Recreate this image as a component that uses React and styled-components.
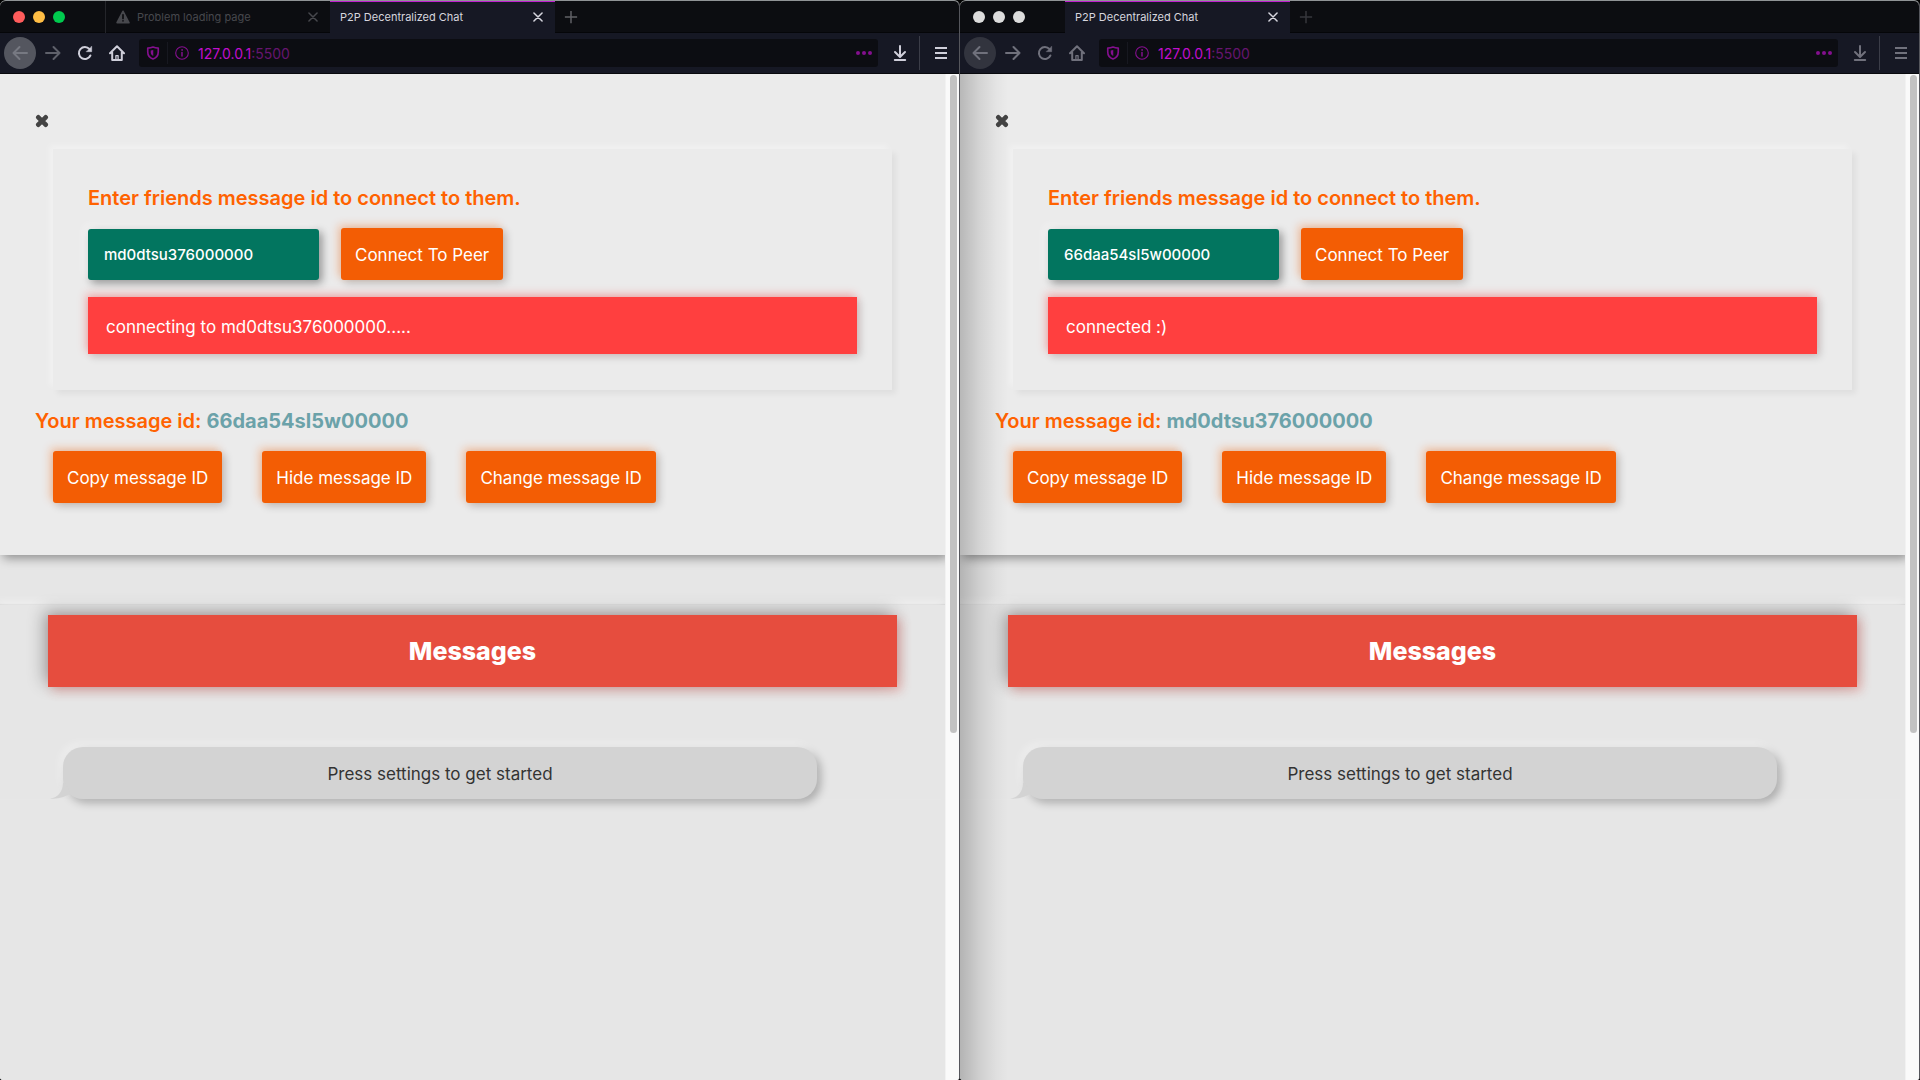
import React from "react";
import styled, { createGlobalStyle } from "styled-components";

const GlobalStyle = createGlobalStyle`
  *, *::before, *::after { box-sizing: border-box; }
  body {
    margin: 0;
    background: #000;
    font-family: Inter, "Liberation Sans", sans-serif;
    color: #333;
  }
  button, input { font-family: inherit; }
  button { border: 0; padding: 0; background: none; cursor: pointer; }
  h1, h2, p { margin: 0; }
`;

const Desktop = styled.div`
  display: grid;
  grid-template-columns: 1fr 1fr;
  min-height: 100vh;
`;

const Window = styled.section`
  display: flex;
  flex-direction: column;
  min-width: 0;
  overflow: hidden;
  border-top: 1px solid #909496;
  border-right: 1px solid #55565c;
  border-radius: 6px 6px 3px 3px;
  background: #e6e6e6;
`;

const TabBar = styled.div`
  display: flex;
  height: 32px;
  background: #0c0d11;
  border-bottom: 1px solid #050609;
`;

const Lights = styled.div`
  display: flex;
  align-items: center;
  gap: 8px;
  width: 105px;
  padding-left: 13px;
`;

const Light = styled.span`
  width: 12px;
  height: 12px;
  border-radius: 50%;
  background: ${(p) => p.$color};
`;

const Tab = styled.div`
  display: flex;
  align-items: center;
  gap: 7px;
  width: 225px;
  height: 32px;
  padding: 0 11px 0 10px;
  font-size: 11px;
  color: ${(p) => (p.$active ? "#d6d6de" : "#47484d")};
  background: ${(p) => (p.$active ? "#161824" : "transparent")};
  border-left: ${(p) => (p.$active ? "0" : "1px solid #24252a")};
  box-shadow: ${(p) => (p.$active ? "inset 0 1px #c01fd0" : "none")};
`;

const TabTitle = styled.span`
  flex: 1;
  white-space: nowrap;
`;

const IconButton = styled.button`
  display: flex;
  align-items: center;
  justify-content: center;
  flex: none;
  width: ${(p) => p.$size || 32}px;
  height: ${(p) => p.$size || 32}px;
  border-radius: 50%;
  color: ${(p) => p.$color || "inherit"};
  background: ${(p) => p.$fill || "none"};
`;

const BackButton = styled(IconButton)`
  margin-right: 1px;
`;

const Toolbar = styled.div`
  display: flex;
  align-items: center;
  height: 41px;
  padding: 0 2px 0 4px;
  background: #161824;
  border-bottom: 1px solid #08090d;
`;

const UrlBar = styled.div`
  display: flex;
  align-items: center;
  flex: 1;
  height: 28px;
  margin: 0 12px 0 6px;
  padding: 0 6px 0 7px;
  border-radius: 3px;
  background: #0c0d12;
  color: #840f8e;
  font-size: 14px;
`;

const UrlDivider = styled.span`
  width: 1px;
  height: 22px;
  margin: 0 7px;
  background: #171820;
`;

const Address = styled.span`
  flex: 1;
  margin-left: 9px;
  color: #65156f;
`;

const Host = styled.span`
  color: #c00fce;
`;

const ToolDivider = styled.span`
  width: 1px;
  height: 34px;
  margin: 0 5px 0 9px;
  background: #3b3d48;
`;

const Viewport = styled.div`
  display: flex;
  flex: 1;
`;

const Page = styled.main`
  flex: 1;
  min-width: 0;
  overflow: hidden;
  background: #e6e6e6;
  position: relative;

  &::before {
    content: "";
    display: ${(p) => (p.$shaded ? "block" : "none")};
    position: absolute;
    inset: 0 auto 0 0;
    width: 48px;
    z-index: 2;
    pointer-events: none;
    background: linear-gradient(90deg, rgba(0, 0, 0, 0.22), rgba(0, 0, 0, 0.1) 40%, rgba(0, 0, 0, 0.03) 75%, transparent);
  }
`;

const Scroller = styled.div`
  width: 14px;
  padding: 1px 2px 0 4px;
  background: #fafafa;
  border-left: 1px solid #f2f2f2;
`;

const Thumb = styled.div`
  height: 65.5%;
  border-radius: 4px;
  background: #c2c2c2;
`;

const Settings = styled.section`
  padding: 32px 35px 52px;
  background: #ebebeb;
  box-shadow: 3px 3px 10px rgba(0, 0, 0, 0.4);
`;

const CloseButton = styled.button`
  display: block;
  height: 33px;
  color: #444;
`;

const Card = styled.form`
  margin: 10px 18px 18px;
  padding: 35px 35px 36px;
  box-shadow: -4px -4px 6px rgba(255, 255, 255, 0.3), 4px 4px 6px rgba(0, 0, 0, 0.05);
`;

const Label = styled.label`
  display: block;
  font-size: 20px;
  line-height: 28px;
  font-weight: 600;
  color: #ff6200;
`;

const Row = styled.div`
  display: flex;
  align-items: flex-end;
  gap: 22px;
  margin: 16px 0 17px;
`;

const PeerInput = styled.input`
  width: 231px;
  height: 51px;
  padding: 0 16px;
  border: 0;
  border-radius: 3px;
  background: #02755f;
  color: #fff;
  font-size: 15px;
  font-weight: 500;
  box-shadow: -4px -4px 8px rgba(255, 255, 255, 0.4), 3px 3px 8px rgba(0, 0, 0, 0.4);
`;

const Action = styled.button`
  height: 52px;
  padding: 2px 14px 0;
  border-radius: 3px;
  background: #f35d04;
  color: #fff;
  font-size: 17px;
  white-space: nowrap;
  box-shadow: -3px -3px 8px rgba(255, 98, 0, 0.3), 3px 3px 8px rgba(0, 0, 0, 0.2);
`;

const Status = styled.p`
  padding: 20px 18px 16px;
  background: #ff3f3f;
  color: #fff;
  font-size: 17px;
  line-height: 21px;
  box-shadow: -2px -3px 8px rgba(255, 63, 63, 0.35), 3px 3px 8px rgba(0, 0, 0, 0.16);
`;

const OwnId = styled.h2`
  font-size: 20px;
  line-height: 26px;
  font-weight: 600;
  color: #ff6200;
`;

const IdValue = styled.span`
  font-weight: 700;
  color: #6ba2a9;
`;

const Actions = styled.div`
  display: flex;
  flex-wrap: wrap;
  gap: 40px;
  margin: 17px 18px 0;
`;

const Messages = styled.section`
  margin-top: 50px;
  padding: 10px 48px 0;
  box-shadow: -2px -4px 8px rgba(255, 255, 255, 0.4), 0 -1px 1px rgba(0, 0, 0, 0.08);
`;

const Title = styled.h1`
  padding: 18px;
  background: #e64d3e;
  color: #fff;
  text-align: center;
  font-size: 25px;
  line-height: 36px;
  font-weight: 800;
  box-shadow: -4px -4px 16px rgba(0, 0, 0, 0.3), 4px 4px 10px rgba(230, 60, 50, 0.3);
`;

const Bubble = styled.p`
  position: relative;
  margin: 60px 80px 0 15px;
  padding: 14px 20px 12px;
  border-radius: 20px;
  background: #d3d3d3;
  color: #333;
  text-align: center;
  font-size: 17px;
  line-height: 26px;
  box-shadow: -3px -4px 8px rgba(255, 255, 255, 0.35), 4px 4px 8px rgba(0, 0, 0, 0.25);
`;

const Tail = styled.svg`
  position: absolute;
  left: -15px;
  bottom: 0;
`;

const Svg = ({ s = 16, w = 2, children, ...rest }) => (
  <svg width={s} height={s} viewBox="0 0 16 16" fill="none" stroke="currentColor"
    strokeWidth={w} strokeLinecap="round" strokeLinejoin="round" aria-hidden="true" {...rest}>
    {children}
  </svg>
);

const BackIcon = () => <Svg><path d="M15 8H1.500M7.500 2 1.500 8l6 6" /></Svg>;
const ForwardIcon = () => <Svg><path d="M1 8h13.500M8.500 2l6 6-6 6" /></Svg>;
const ReloadIcon = () => (
  <Svg>
    <path d="M13.400 10.500A6 6 0 1 1 12.500 4.200" />
    <path d="M14.700 1.500v5.200H9.500z" fill="currentColor" strokeWidth="0.5" />
  </Svg>
);
const HomeIcon = () => (
  <Svg>
    <path d="M1 8.300 8 1.300l7 7M3.200 7.500V15h9.600V7.500" />
    <path d="M6.900 15v-4.300h2.200V15" strokeWidth="1.300" />
  </Svg>
);
const ShieldIcon = () => (
  <Svg s={14} w={1.9}>
    <path d="M8 1.200c2 .9 4 1.200 6 1.200v4.400c0 3.800-2.500 6.800-6 8-3.500-1.200-6-4.200-6-8V2.400c2 0 4-.3 6-1.200z" />
    <path d="M8.300 4.600v6.800C6.300 10.400 5.400 8.800 5.400 7V5z" fill="currentColor" stroke="none" />
  </Svg>
);
const InfoIcon = () => (
  <Svg s={14} w={1.3}>
    <circle cx="8" cy="8" r="7.200" />
    <path d="M8 7.300v4.200" strokeWidth="1.700" />
    <circle cx="8" cy="4.500" r="0.600" fill="currentColor" strokeWidth="0.800" />
  </Svg>
);
const MoreIcon = () => (
  <Svg>
    {[2, 8, 14].map((x) => <circle key={x} cx={x} cy="8" r="2" fill="currentColor" stroke="none" />)}
  </Svg>
);
const DownloadIcon = () => <Svg><path d="M8 1v10.500M3 7l5 5 5-5M2.800 15h10.400" /></Svg>;
const MenuIcon = () => <Svg><path d="M2 3h12M2 8h12M2 13h12" strokeLinecap="butt" /></Svg>;
const CrossIcon = () => <Svg s={10} w={2.4}><path d="M1.500 1.500l13 13M14.500 1.500l-13 13" /></Svg>;
const PlusIcon = () => <Svg s={14} w={1.7}><path d="M8 1v14M1 8h14" strokeLinecap="butt" /></Svg>;
const WarningIcon = () => (
  <Svg s={14}>
    <path d="M8 1.600 14.700 14.400H1.300z" fill="currentColor" />
    <path d="M8 5.500v4.200M8 12.300v.1" stroke="#0c0d11" />
  </Svg>
);
const HeavyCross = () => (
  <Svg s={14}>
    <path d="M3.800 3.800l8.400 8.400M12.200 3.800l-8.400 8.400" strokeWidth="5.400" />
  </Svg>
);

function BrowserWindow({ focused, lights, peer, status, ownId, brokenTab }) {
  const tool = focused ? "#cfcfda" : "#70717c";
  const dim = focused ? "#5f616b" : "#70717c";
  const fieldId = `peer-${ownId}`;
  return (
    <Window>
      <TabBar>
        <Lights>{lights.map((c, i) => <Light key={i} $color={c} />)}</Lights>
        {brokenTab && (
          <Tab>
            <WarningIcon />
            <TabTitle>Problem loading page</TabTitle>
            <IconButton $size={12} aria-label="Close tab"><CrossIcon /></IconButton>
          </Tab>
        )}
        <Tab $active>
          <TabTitle>P2P Decentralized Chat</TabTitle>
          <IconButton $size={12} aria-label="Close tab"><CrossIcon /></IconButton>
        </Tab>
        <IconButton $color={focused ? "#606166" : "#36373c"} aria-label="New tab"><PlusIcon /></IconButton>
      </TabBar>
      <Toolbar>
        <BackButton $color={focused ? "#777982" : "#70717c"} $fill={focused ? "#54565f" : "#32343e"} aria-label="Back"><BackIcon /></BackButton>
        <IconButton $color={dim} aria-label="Forward"><ForwardIcon /></IconButton>
        <IconButton $color={tool} aria-label="Reload"><ReloadIcon /></IconButton>
        <IconButton $color={tool} aria-label="Home"><HomeIcon /></IconButton>
        <UrlBar>
          <ShieldIcon />
          <UrlDivider />
          <InfoIcon />
          <Address><Host>127.0.0.1</Host>:5500</Address>
          <MoreIcon />
        </UrlBar>
        <IconButton $size={20} $color={tool} aria-label="Downloads"><DownloadIcon /></IconButton>
        <ToolDivider />
        <IconButton $color={tool} aria-label="Menu"><MenuIcon /></IconButton>
      </Toolbar>
      <Viewport>
        <Page $shaded={!focused}>
          <Settings>
            <CloseButton aria-label="Close settings"><HeavyCross /></CloseButton>
            <Card onSubmit={(e) => e.preventDefault()}>
              <Label htmlFor={fieldId}>Enter friends message id to connect to them.</Label>
              <Row>
                <PeerInput id={fieldId} type="text" defaultValue={peer} />
                <Action type="submit">Connect To Peer</Action>
              </Row>
              <Status>{status}</Status>
            </Card>
            <OwnId>Your message id: <IdValue>{ownId}</IdValue></OwnId>
            <Actions>
              <Action type="button">Copy message ID</Action>
              <Action type="button">Hide message ID</Action>
              <Action type="button">Change message ID</Action>
            </Actions>
          </Settings>
          <Messages>
            <Title>Messages</Title>
            <Bubble>
              <Tail width="24" height="16" viewBox="0 0 24 16" aria-hidden="true">
                <path d="M15 0C15 8 10 15 2 15.500C9 16.500 17 14 23 10.500L17 0z" fill="#d3d3d3" />
              </Tail>
              Press settings to get started
            </Bubble>
          </Messages>
        </Page>
        <Scroller><Thumb /></Scroller>
      </Viewport>
    </Window>
  );
}

export default function App() {
  return (
    <>
      <GlobalStyle />
      <Desktop>
        <BrowserWindow
          focused
          brokenTab
          lights={["#ff5c5c", "#ffbd44", "#00ca4e"]}
          peer="md0dtsu376000000"
          status="connecting to md0dtsu376000000....."
          ownId="66daa54sl5w00000"
        />
        <BrowserWindow
          lights={["#dcdcdc", "#dcdcdc", "#dcdcdc"]}
          peer="66daa54sl5w00000"
          status="connected :)"
          ownId="md0dtsu376000000"
        />
      </Desktop>
    </>
  );
}
